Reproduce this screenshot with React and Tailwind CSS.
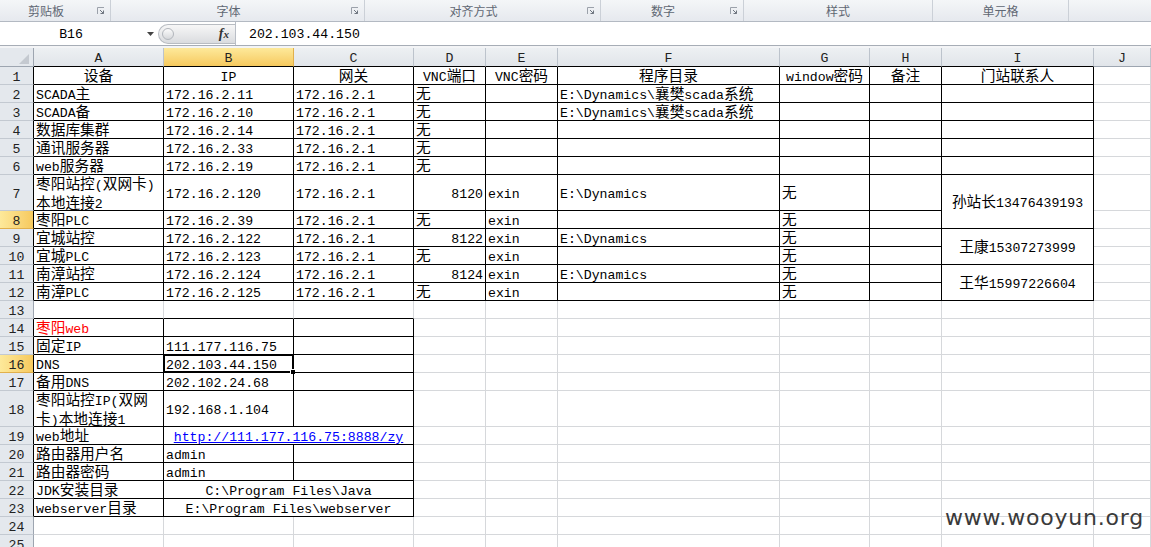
import React from "react";

const CJK = /([\u2e80-\u9fff\uff00-\uffef]+)/;

// Song-style sheet text: latin in a mono face, CJK runs a bit larger
function Txt({ s }) {
  return s.split(CJK).map((p, i) =>
    !p ? null : CJK.test(p) ? (
      <span key={i} className="text-[14.7px]">{p}</span>
    ) : (
      <span key={i}>{p}</span>
    )
  );
}

const COLS = ["A", "B", "C", "D", "E", "F", "G", "H", "I", "J"];

const groups = [
  { w: "w-[111px]", label: "剪贴板", launcher: true },
  { w: "w-[254px]", label: "字体", launcher: true },
  { w: "w-[236px]", label: "对齐方式", launcher: true },
  { w: "w-[143px]", label: "数字", launcher: true },
  { w: "w-[189px]", label: "样式", launcher: false },
  { w: "w-[136px]", label: "单元格", launcher: false },
];

const data = {
  1: ["设备", "IP", "网关", "VNC端口", "VNC密码", "程序目录", "window密码", "备注", "门站联系人"],
  2: ["SCADA主", "172.16.2.11", "172.16.2.1", "无", "", "E:\\Dynamics\\襄樊scada系统", "", "", ""],
  3: ["SCADA备", "172.16.2.10", "172.16.2.1", "无", "", "E:\\Dynamics\\襄樊scada系统", "", "", ""],
  4: ["数据库集群", "172.16.2.14", "172.16.2.1", "无", "", "", "", "", ""],
  5: ["通讯服务器", "172.16.2.33", "172.16.2.1", "无", "", "", "", "", ""],
  6: ["web服务器", "172.16.2.19", "172.16.2.1", "无", "", "", "", "", ""],
  7: [
    { lines: ["枣阳站控(双网卡)", "本地连接2"] },
    "172.16.2.120",
    "172.16.2.1",
    { t: "8120", a: "r" },
    "exin",
    "E:\\Dynamics",
    "无",
    "",
    { t: "孙站长13476439193", a: "c", rs: 2 },
  ],
  8: ["枣阳PLC", "172.16.2.39", "172.16.2.1", "无", "exin", "", "无", "", null],
  9: [
    "宜城站控",
    "172.16.2.122",
    "172.16.2.1",
    { t: "8122", a: "r" },
    "exin",
    "E:\\Dynamics",
    "无",
    "",
    { t: "王康15307273999", a: "c", rs: 2 },
  ],
  10: ["宜城PLC", "172.16.2.123", "172.16.2.1", "无", "exin", "", "无", "", null],
  11: [
    "南漳站控",
    "172.16.2.124",
    "172.16.2.1",
    { t: "8124", a: "r" },
    "exin",
    "E:\\Dynamics",
    "无",
    "",
    { t: "王华15997226604", a: "c", rs: 2 },
  ],
  12: ["南漳PLC", "172.16.2.125", "172.16.2.1", "无", "exin", "", "无", "", null],
  14: [{ t: "枣阳web", red: true }, "", ""],
  15: ["固定IP", "111.177.116.75", ""],
  16: ["DNS", { t: "202.103.44.150", sel: true }, ""],
  17: ["备用DNS", "202.102.24.68", ""],
  18: [{ lines: ["枣阳站控IP(双网", "卡)本地连接1"] }, "192.168.1.104", ""],
  19: ["web地址", { t: "http://111.177.116.75:8888/zy", a: "c", cs: 2, link: true }, null],
  20: ["路由器用户名", "admin", ""],
  21: ["路由器密码", "admin", ""],
  22: ["JDK安装目录", { t: "C:\\Program Files\\Java", a: "c", cs: 2 }, null],
  23: ["webserver目录", { t: "E:\\Program Files\\webserver", a: "c", cs: 2 }, null],
};

function bordered(r, c) {
  return (r >= 1 && r <= 12 && c <= 8) || (r >= 14 && r <= 23 && c <= 2);
}

function Launcher() {
  return (
    <svg width="8" height="8" viewBox="0 0 8 8">
      <path d="M0.5 7V0.5H7" stroke="#9ba1aa" fill="none" />
      <path d="M3 3L6.5 6.5M3.5 6.5H6.5V3.5" stroke="#6f7680" fill="none" />
    </svg>
  );
}

function Ribbon() {
  return (
    <div className="flex h-[22px] border-b border-[#b3b9c2] bg-gradient-to-b from-[#f4f6f8] to-[#e6e9ee]">
      {groups.map((g) => (
        <div key={g.label} className={`flex ${g.w} items-center border-r border-[#cbd0d7]`}>
          <div className="flex-1 text-center text-[12px] text-[#5f6773]">{g.label}</div>
          {g.launcher && (
            <div className="flex w-[18px] justify-center">
              <Launcher />
            </div>
          )}
        </div>
      ))}
      <div className="flex-1" />
    </div>
  );
}

function FormulaBar() {
  return (
    <div className="flex h-[24px] border-b border-[#a7adb6] bg-white font-['Liberation_Mono','Noto_Sans_CJK_SC',monospace] text-[13.2px] text-black">
      <div className="relative flex w-[158px] items-center justify-center pt-[3px]">
        <span className="pr-[16px]">B16</span>
        <svg className="absolute right-[4px] top-[10px]" width="7" height="4" viewBox="0 0 7 4">
          <path d="M0 0H7L3.5 4Z" fill="#444" />
        </svg>
      </div>
      <div className="flex w-[78px] items-center border-r border-[#b9bec6]">
        <div className="flex h-[20px] flex-1 items-center rounded-l-full border border-r-0 border-[#b8bcc2] bg-gradient-to-b from-[#f7f7f7] to-[#dadcdf] pl-[3px]">
          <div className="h-[12px] w-[12px] rounded-full border border-[#b2b6bc] bg-gradient-to-b from-[#fbfbfb] to-[#d6d8db]" />
          <div className="flex-1" />
          <span className="pr-[6px] font-['Liberation_Serif',serif] text-[14px] font-bold italic text-[#333]">
            f<span className="text-[11px]">x</span>
          </span>
        </div>
      </div>
      <div className="flex flex-1 items-center pl-[13px] pt-[3px]">202.103.44.150</div>
    </div>
  );
}

function Sheet() {
  const items = [];
  // corner
  items.push(
    <div key="corner" className="flex items-end justify-end border-r border-b border-[#9da5b0] bg-[#e4e8ed] pb-[2px] pr-[4px]">
      <svg width="10" height="10" viewBox="0 0 10 10">
        <path d="M10 0V10H0Z" fill="#c4c9d0" />
      </svg>
    </div>
  );
  COLS.forEach((col, c) => {
    const sel = col === "B";
    items.push(
      <div
        key={"h" + col}
        className={`flex items-center justify-center border-r border-b pt-[2px] ${
          sel
            ? "border-r-[#e1b04c] bg-gradient-to-b from-[#fde99a] to-[#f6c95d]"
            : "border-r-[#bcc3cc] bg-gradient-to-b from-[#edf0f3] to-[#e1e5ea]"
        } ${bordered(1, c) ? "border-b-black" : "border-b-[#9da5b0]"}`}
      >
        {col}
      </div>
    );
  });

  for (let r = 1; r <= 25; r++) {
    const selRow = r === 8 || r === 16;
    items.push(
      <div
        key={"r" + r}
        className={`flex items-center justify-center border-r border-b pt-[4px] ${
          selRow
            ? "border-b-[#e1b04c] bg-gradient-to-r from-[#fde99a] to-[#f6c95d]"
            : "border-b-[#c3c9d1] bg-[#e4e8ed]"
        } ${bordered(r, 0) ? "border-r-black" : "border-r-[#9da5b0]"}`}
      >
        {r}
      </div>
    );
    const row = data[r] || [];
    for (let c = 0; c < COLS.length; c++) {
      let cell = c < row.length ? row[c] : "";
      if (cell === null) continue;
      if (typeof cell === "string") cell = { t: cell };
      const a = cell.a || (r === 1 ? "c" : "l");
      const cs = cell.cs || 1;
      const rs = cell.rs || 1;
      const rb = bordered(r, c) || bordered(r, c + cs);
      const bb = bordered(r, c) || bordered(r + rs, c);
      items.push(
        <div
          key={r + "-" + c}
          className={`relative flex items-center overflow-visible whitespace-nowrap border-r border-b px-[2px] pt-[4px] ${
            rb ? "border-r-black" : "border-r-[#d6d8db]"
          } ${bb ? "border-b-black" : "border-b-[#d6d8db]"} ${
            a === "c" ? "justify-center" : a === "r" ? "justify-end" : "justify-start"
          } ${cs === 2 ? "col-span-2" : ""} ${rs === 2 ? "row-span-2" : ""} ${
            cell.red ? "text-[#ff0000]" : cell.link ? "text-[#0000ff] underline" : "text-black"
          }`}
        >
          {cell.lines ? (
            <div className="leading-[18px]">
              {cell.lines.map((l, i) => (
                <div key={i}>
                  <Txt s={l} />
                </div>
              ))}
            </div>
          ) : (
            <span>
              <Txt s={cell.t} />
            </span>
          )}
          {cell.sel && (
            <>
              <div className="pointer-events-none absolute -inset-px border-2 border-black" />
              <div className="absolute -bottom-[3px] -right-[3px] h-[6px] w-[6px] border border-white bg-black" />
            </>
          )}
        </div>
      );
    }
  }

  return (
    <div className="grid grid-cols-[34px_130px_130px_120px_72px_72px_222px_90px_72px_152px_1fr] grid-rows-[19px_repeat(6,18px)_36px_repeat(10,18px)_36px_repeat(7,18px)] font-['Liberation_Mono','Noto_Sans_CJK_SC',monospace] text-[13.2px] leading-[17px] text-[#222]">
      {items}
    </div>
  );
}

export default function App() {
  return (
    <div className="relative h-[547px] w-[1151px] overflow-hidden bg-white font-['Noto_Sans_CJK_SC',sans-serif]">
      <Ribbon />
      <FormulaBar />
      <div className="h-[2px] bg-[#f3f4f6]" />
      <Sheet />
      <div className="absolute left-[945px] top-[503px] font-['DejaVu_Sans',sans-serif] text-[22px] leading-[30px] tracking-[0.8px] text-[#3a3a3a]">
        www.wooyun.org
      </div>
    </div>
  );
}
